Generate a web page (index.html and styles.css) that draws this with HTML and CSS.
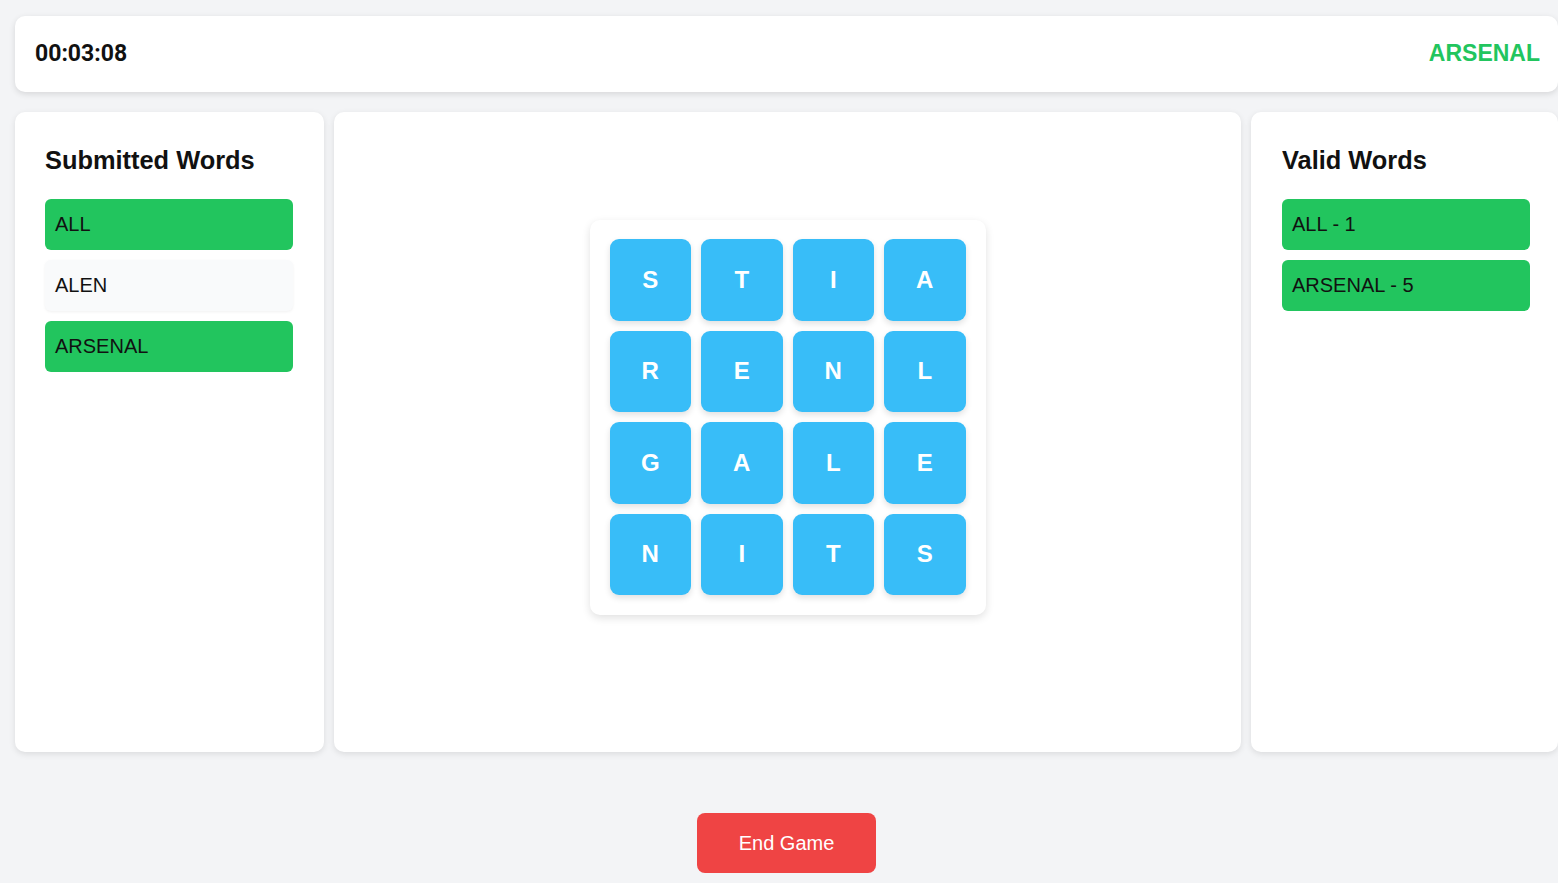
FILE: index.html
```html
<!DOCTYPE html>
<html lang="en">
<head>
<meta charset="utf-8">
<title>Word Game</title>
<link rel="stylesheet" href="styles.css">
</head>
<body>
<div class="app">
  <header class="topbar">
    <div class="timer">00:03:08</div>
    <div class="target">ARSENAL</div>
  </header>
  <main class="layout">
    <section class="panel side">
      <h2 class="panel-title">Submitted Words</h2>
      <ul class="word-list">
        <li class="word valid">ALL</li>
        <li class="word invalid">ALEN</li>
        <li class="word valid">ARSENAL</li>
      </ul>
    </section>
    <section class="panel center">
      <div class="board">
        <div class="tile">S</div><div class="tile">T</div><div class="tile">I</div><div class="tile">A</div>
        <div class="tile">R</div><div class="tile">E</div><div class="tile">N</div><div class="tile">L</div>
        <div class="tile">G</div><div class="tile">A</div><div class="tile">L</div><div class="tile">E</div>
        <div class="tile">N</div><div class="tile">I</div><div class="tile">T</div><div class="tile">S</div>
      </div>
    </section>
    <section class="panel side right">
      <h2 class="panel-title">Valid Words</h2>
      <ul class="word-list">
        <li class="word valid">ALL - 1</li>
        <li class="word valid">ARSENAL - 5</li>
      </ul>
    </section>
  </main>
  <div class="actions">
    <button class="end-btn">End Game</button>
  </div>
</div>
</body>
</html>
```
FILE: styles.css
```css
* { box-sizing: border-box; }
html, body { margin: 0; padding: 0; }
body {
  background: #f3f4f6;
  font-family: "Liberation Sans", Arial, sans-serif;
  color: #111827;
  overflow: hidden;
}
.app {
  width: 1558px;
  padding: 16px 0 0 15px;
}
.topbar {
  display: flex;
  justify-content: space-between;
  align-items: center;
  background: #fff;
  border-radius: 10px;
  padding: 0 18px 2px 20px;
  height: 76px;
  box-shadow: 0 2px 6px rgba(0,0,0,0.12);
}
.timer {
  font-family: Roboto, "Liberation Sans", sans-serif;
  font-weight: 700;
  font-size: 23px;
  color: #111;
}
.target {
  font-weight: 700;
  font-size: 23px;
  color: #22c55e;
}
.layout {
  display: grid;
  grid-template-columns: 309px 1fr 307px;
  gap: 10px;
  margin-top: 20px;
  height: 640px;
}
.panel {
  background: #fff;
  border-radius: 10px;
  box-shadow: 0 2px 6px rgba(0,0,0,0.10);
}
.side { padding: 30px 31px 30px 30px; }
.side.right { padding: 30px 28px 30px 31px; }
.panel-title {
  margin: 3px 0 24px;
  font-size: 25.4px;
  font-weight: 700;
  line-height: 30px;
  color: #111;
}
.word-list {
  list-style: none;
  margin: 0;
  padding: 0;
  display: flex;
  flex-direction: column;
  gap: 10px;
}
.word {
  font-size: 20px;
  line-height: 23px;
  padding: 14px 10px;
  border-radius: 6px;
  color: #111;
}
.word.valid { background: #22c55e; }
.word.invalid { background: #f9fafb; box-shadow: 0 1px 3px rgba(0,0,0,0.06); }
.center {
  display: flex;
  justify-content: center;
  align-items: flex-start;
  padding-top: 108px;
}
.board {
  display: grid;
  grid-template-columns: repeat(4, 81.5px);
  grid-auto-rows: 81.5px;
  gap: 10px;
  padding: 19px 20px 20px;
  background: #fff;
  border-radius: 10px;
  box-shadow: 0 3px 8px rgba(0,0,0,0.12);
}
.tile {
  display: flex;
  align-items: center;
  justify-content: center;
  background: #38bdf8;
  color: #fff;
  font-weight: 700;
  font-size: 24px;
  border-radius: 9px;
  box-shadow: 0 3px 6px rgba(0,0,0,0.12);
}
.actions {
  display: flex;
  justify-content: center;
  margin-top: 61px;
}
.end-btn {
  font-family: "Liberation Sans", Arial, sans-serif;
  font-size: 20px;
  line-height: 24px;
  padding: 18px 42px;
  background: #ef4444;
  color: #fff;
  border: none;
  border-radius: 8px;
}
```
